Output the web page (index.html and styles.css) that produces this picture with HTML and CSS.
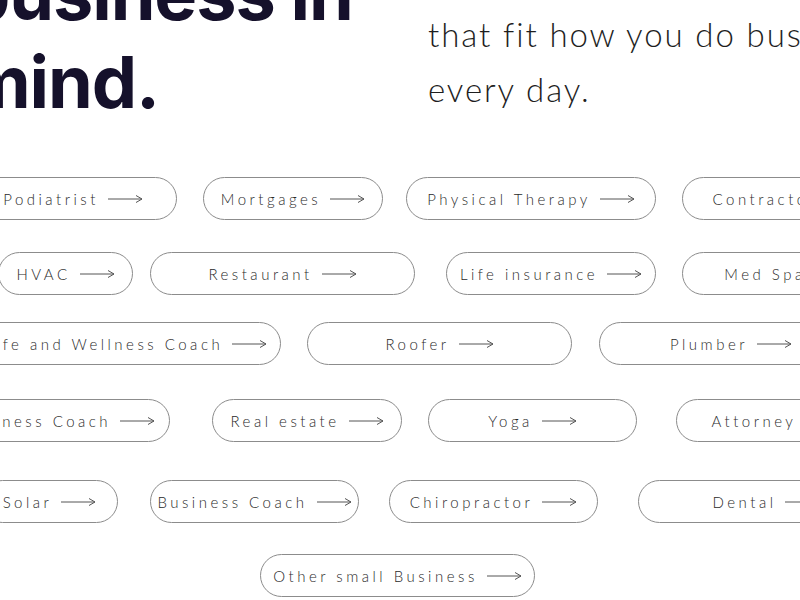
FILE: index.html
```html
<!DOCTYPE html>
<html lang="en">
<head>
<meta charset="utf-8">
<title>Business in mind</title>
<link rel="stylesheet" href="styles.css">
</head>
<body>
<div class="page">
  <header class="hero">
    <h1 class="title">business in<br>mind.</h1>
    <p class="lead">Smart tools,<br>that fit how you do business<br>every day.</p>
  </header>

  <section class="tags">
    <div class="row row-1">
      <a class="pill podiatrist">Podiatrist<svg class="arrow" viewBox="0 0 35 10"><path d="M0 5H34M28 1.5L34 5L28 8.5"/></svg></a>
      <a class="pill mortgages">Mortgages<svg class="arrow" viewBox="0 0 35 10"><path d="M0 5H34M28 1.5L34 5L28 8.5"/></svg></a>
      <a class="pill physical">Physical Therapy<svg class="arrow" viewBox="0 0 35 10"><path d="M0 5H34M28 1.5L34 5L28 8.5"/></svg></a>
      <a class="pill contractor">Contractor<svg class="arrow" viewBox="0 0 35 10"><path d="M0 5H34M28 1.5L34 5L28 8.5"/></svg></a>
    </div>
    <div class="row row-2">
      <a class="pill hvac">HVAC<svg class="arrow" viewBox="0 0 35 10"><path d="M0 5H34M28 1.5L34 5L28 8.5"/></svg></a>
      <a class="pill restaurant">Restaurant<svg class="arrow" viewBox="0 0 35 10"><path d="M0 5H34M28 1.5L34 5L28 8.5"/></svg></a>
      <a class="pill life">Life insurance<svg class="arrow" viewBox="0 0 35 10"><path d="M0 5H34M28 1.5L34 5L28 8.5"/></svg></a>
      <a class="pill medspa">Med Spa<svg class="arrow" viewBox="0 0 35 10"><path d="M0 5H34M28 1.5L34 5L28 8.5"/></svg></a>
    </div>
    <div class="row row-3">
      <a class="pill wellness">Life and Wellness Coach<svg class="arrow" viewBox="0 0 35 10"><path d="M0 5H34M28 1.5L34 5L28 8.5"/></svg></a>
      <a class="pill roofer">Roofer<svg class="arrow" viewBox="0 0 35 10"><path d="M0 5H34M28 1.5L34 5L28 8.5"/></svg></a>
      <a class="pill plumber">Plumber<svg class="arrow" viewBox="0 0 35 10"><path d="M0 5H34M28 1.5L34 5L28 8.5"/></svg></a>
    </div>
    <div class="row row-4">
      <a class="pill fitness">Fitness Coach<svg class="arrow" viewBox="0 0 35 10"><path d="M0 5H34M28 1.5L34 5L28 8.5"/></svg></a>
      <a class="pill realestate">Real estate<svg class="arrow" viewBox="0 0 35 10"><path d="M0 5H34M28 1.5L34 5L28 8.5"/></svg></a>
      <a class="pill yoga">Yoga<svg class="arrow" viewBox="0 0 35 10"><path d="M0 5H34M28 1.5L34 5L28 8.5"/></svg></a>
      <a class="pill attorney">Attorney<svg class="arrow" viewBox="0 0 35 10"><path d="M0 5H34M28 1.5L34 5L28 8.5"/></svg></a>
    </div>
    <div class="row row-5">
      <a class="pill solar">Solar<svg class="arrow" viewBox="0 0 35 10"><path d="M0 5H34M28 1.5L34 5L28 8.5"/></svg></a>
      <a class="pill bizcoach">Business Coach<svg class="arrow" viewBox="0 0 35 10"><path d="M0 5H34M28 1.5L34 5L28 8.5"/></svg></a>
      <a class="pill chiro">Chiropractor<svg class="arrow" viewBox="0 0 35 10"><path d="M0 5H34M28 1.5L34 5L28 8.5"/></svg></a>
      <a class="pill dental">Dental<svg class="arrow" viewBox="0 0 35 10"><path d="M0 5H34M28 1.5L34 5L28 8.5"/></svg></a>
    </div>
    <div class="row row-6">
      <a class="pill other">Other small Business<svg class="arrow" viewBox="0 0 35 10"><path d="M0 5H34M28 1.5L34 5L28 8.5"/></svg></a>
    </div>
  </section>
</div>
</body>
</html>
```

FILE: styles.css
```css
html, body {
  margin: 0;
  padding: 0;
  background: #ffffff;
}

.page {
  width: 800px;
  height: 600px;
  overflow: hidden;
  position: relative;
}

.hero {
  display: flex;
  align-items: flex-start;
  margin-top: -50px;
}

.title {
  flex: 0 0 463px;
  margin: 0 0 0 -35px;
  font-family: "Inter", "Liberation Sans", sans-serif;
  font-weight: 700;
  font-size: 72px;
  line-height: 88px;
  letter-spacing: -1.1px;
  color: #15112b;
  white-space: nowrap;
}

.lead {
  margin: 2px 0 0 0;
  font-family: "Lato", "Liberation Sans", sans-serif;
  font-weight: 300;
  font-size: 33px;
  line-height: 55px;
  letter-spacing: 1.9px;
  color: #1e1e1e;
  white-space: nowrap;
}

.tags {
  margin-top: 51px;
}

.row {
  display: flex;
  height: 43px;
  white-space: nowrap;
}

.row-2 { margin-top: 32px; }
.row-3 { margin-top: 27px; }
.row-4 { margin-top: 34px; }
.row-5 { margin-top: 38px; }
.row-6 { margin-top: 31px; }

.pill {
  flex: 0 0 auto;
  box-sizing: border-box;
  height: 43px;
  display: flex;
  align-items: center;
  justify-content: center;
  gap: 9px;
  border: 1px solid #8c8c8c;
  border-radius: 22px;
  font-family: "Lato", "Liberation Sans", sans-serif;
  font-weight: 300;
  font-size: 15px;
  letter-spacing: 3.5px;
  color: #2a2a2a;
  text-decoration: none;
}

.arrow {
  width: 35px;
  height: 10px;
  flex: 0 0 auto;
}

.arrow path {
  fill: none;
  stroke: #555555;
  stroke-width: 1;
}

/* row 1 */
.podiatrist { width: 208px; margin-left: -31px; }
.mortgages  { width: 180px; margin-left: 26px; }
.physical   { width: 250px; margin-left: 23px; }
.contractor { width: 210px; margin-left: 26px; }

/* row 2 */
.hvac       { width: 135px; margin-left: -2px; }
.restaurant { width: 265px; margin-left: 17px; }
.life       { width: 210px; margin-left: 31px; }
.medspa     { width: 210px; margin-left: 26px; }

/* row 3 */
.wellness   { width: 310px; margin-left: -29px; }
.roofer     { width: 265px; margin-left: 26px; }
.plumber    { width: 264px; margin-left: 27px; }

/* row 4 */
.fitness    { width: 210px; margin-left: -40px; }
.realestate { width: 190px; margin-left: 42px; }
.yoga       { width: 209px; margin-left: 26px; }
.attorney   { width: 200px; margin-left: 39px; }

/* row 5 */
.solar      { width: 137px; margin-left: -19px; }
.bizcoach   { width: 209px; margin-left: 32px; }
.chiro      { width: 209px; margin-left: 30px; }
.dental     { width: 257px; margin-left: 40px; }

/* row 6 */
.other      { width: 275px; margin-left: 260px; }
```
